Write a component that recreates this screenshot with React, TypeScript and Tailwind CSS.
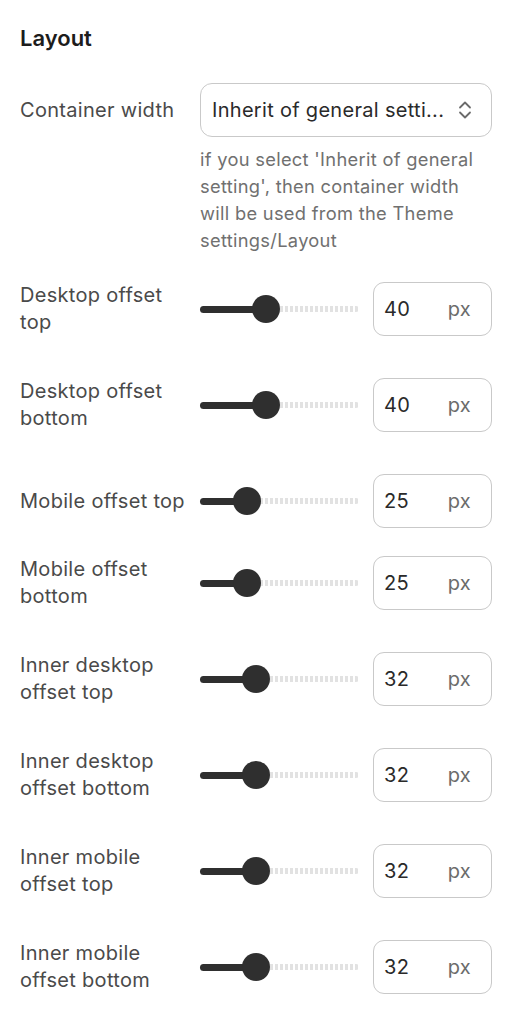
import React from 'react';

interface RangeRowProps {
  label: string;
  value: number;
  tight?: boolean;
}

const RangeRow: React.FC<RangeRowProps> = ({ label, value, tight }) => {
  // thumb travel sits inside the 159px track, 28px thumb
  const left = 14 + (value / 100) * (159 - 28);

  return (
    <div className={`flex items-center ${tight ? 'mb-[28px]' : 'mb-[42px]'}`}>
      <div className="w-[180px] pr-3 text-[20px] tracking-[0.3px] leading-[27px] text-[#4a4a4a]">{label}</div>
      <div className="flex items-center">
        <div className="relative w-[159px] h-[28px]">
          <div className="absolute left-0 right-0 top-[11px] h-[6px] rounded-full bg-[repeating-linear-gradient(to_right,#e2e2e2_0_3px,transparent_3px_5px)]" />
          <div
            className="absolute left-0 top-[10.5px] h-[7px] rounded-full bg-[#2f2f2f]"
            style={{ width: left }}
          />
          <div
            className="absolute top-0 w-[28px] h-[28px] -ml-[14px] rounded-full bg-[#2f2f2f]"
            style={{ left }}
          />
        </div>
        <div className="ml-[14px] flex items-center justify-between w-[119px] h-[54px] pl-[10px] pr-[20px] border border-[#c9c9c9] rounded-[11px] bg-white">
          <span className="text-[20px] tracking-[0.3px] text-[#2a2a2a]">{value}</span>
          <span className="text-[20px] tracking-[0.3px] text-[#6b6b6b]">px</span>
        </div>
      </div>
    </div>
  );
};

const rows = [
  { label: 'Desktop offset top', value: 40 },
  { label: 'Desktop offset bottom', value: 40 },
  { label: 'Mobile offset top', value: 25, tight: true },
  { label: 'Mobile offset bottom', value: 25 },
  { label: 'Inner desktop offset top', value: 32 },
  { label: 'Inner desktop offset bottom', value: 32 },
  { label: 'Inner mobile offset top', value: 32 },
  { label: 'Inner mobile offset bottom', value: 32 },
];

export default function App() {
  return (
    <div className="min-h-[1024px] w-[513px] bg-white pl-5 pr-[21px] pt-6 font-['Inter','Liberation_Sans',sans-serif]">
      <h2 className="text-[22px] leading-[28px] font-semibold text-[#1c1c1c]">Layout</h2>

      <div className="mt-[31px] flex">
        <div className="w-[180px] h-[54px] flex items-center text-[20px] tracking-[0.3px] text-[#4a4a4a]">Container width</div>
        <div className="w-[292px]">
          <div className="flex items-center justify-between h-[54px] pl-[11px] pr-[18px] border border-[#c9c9c9] rounded-[12px] bg-white">
            <span className="text-[20px] tracking-[0.3px] text-[#2a2a2a] whitespace-nowrap">Inherit of general setti...</span>
            <svg width="16" height="20" viewBox="0 0 16 20" fill="none" stroke="#6b6b6b" strokeWidth="1.8" strokeLinecap="round" strokeLinejoin="round">
              <path d="M3 7.5 L8 2.5 L13 7.5" />
              <path d="M3 12.5 L8 17.5 L13 12.5" />
            </svg>
          </div>
          <p className="mt-[9px] text-[18.3px] tracking-[0.3px] leading-[27px] text-[#707070] pr-2">
            if you select 'Inherit of general setting', then container width will be used from the Theme settings/Layout
          </p>
        </div>
      </div>

      <div className="mt-[28px]">
        {rows.map((r) => (
          <RangeRow key={r.label} label={r.label} value={r.value} tight={r.tight} />
        ))}
      </div>
    </div>
  );
}
